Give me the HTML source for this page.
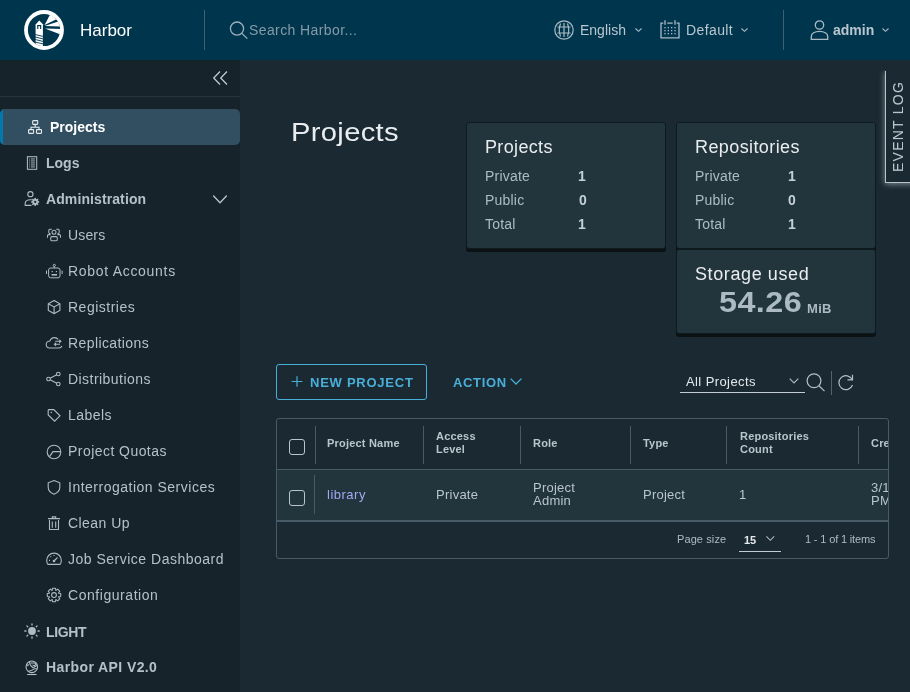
<!DOCTYPE html>
<html><head><meta charset="utf-8">
<style>
*{box-sizing:border-box;margin:0;padding:0}
html,body{width:910px;height:692px;overflow:hidden;background:#1b2a32;font-family:"Liberation Sans",sans-serif;-webkit-font-smoothing:antialiased}
.a{position:absolute;white-space:nowrap;line-height:1;will-change:transform}
svg{position:absolute;overflow:visible}
#hdr{position:absolute;left:0;top:0;width:910px;height:60px;background:#00364d}
#side{position:absolute;left:0;top:60px;width:240px;height:632px;background:#17232b}
.nav{color:#b4c1c9;font-size:14px}
.b{font-weight:bold}
.card{position:absolute;background:#22343c;border:1px solid #0f1a1f;border-radius:3px;box-shadow:0 3px 0 0 #0c1114}
.lbl{font-size:14px;color:#adbbc4;letter-spacing:.2px}
.val{font-size:14px;color:#c5d0d6;font-weight:bold}
.gh{font-size:11px;font-weight:bold;color:#b9c5cc;letter-spacing:.2px}
.gc{font-size:13px;color:#b9c5cc;letter-spacing:.25px}
</style></head><body>

<div id="hdr"></div>
<div id="side"></div>

<!-- header -->
<svg style="left:24px;top:10px" width="40" height="40" viewBox="0 0 40 40">
  <defs><clipPath id="ic"><circle cx="20" cy="20" r="16.2"/></clipPath></defs>
  <circle cx="20" cy="20" r="18" fill="none" stroke="#fff" stroke-width="3.8"/>
  <g clip-path="url(#ic)" fill="#fff">
    <polygon points="20.6,14.9 27.4,2 33.5,8.8"/>
    <polygon points="20.6,16.1 35,11.2 37.5,16.6"/>
    <polygon points="21,18.4 37.5,18.9 36.5,24.5"/>
    <polygon points="11.6,14.6 15.2,10.6 18.9,14.2 18.9,40 11.6,40"/>
  </g>
  <rect x="13.2" y="15" width="4" height="4" fill="#00364d"/>
  <rect x="14.3" y="16.2" width="1.8" height="2.8" fill="#fff"/>
  <g stroke="#00364d" stroke-width="0.9">
    <line x1="11" y1="24.5" x2="19.5" y2="26.5"/>
    <line x1="11" y1="27" x2="19.5" y2="29"/>
    <line x1="11" y1="29.5" x2="19.5" y2="31.5"/>
    <line x1="11" y1="32" x2="19.5" y2="34"/>
  </g>
</svg>
<div class="a" style="left:80px;top:22.2px;font-size:17px;color:#fff">Harbor</div>
<div style="position:absolute;left:204px;top:10px;width:1px;height:40px;background:#3f5f72"></div>
<svg style="left:229px;top:21px" width="20" height="20" viewBox="0 0 20 20">
  <circle cx="8" cy="7.6" r="6.6" fill="none" stroke="#9eb0bc" stroke-width="1.3"/>
  <line x1="12.8" y1="12.4" x2="18.3" y2="17.6" stroke="#9eb0bc" stroke-width="1.3"/>
</svg>
<div class="a" style="left:249.3px;top:23.15px;font-size:14px;color:#8599a7;letter-spacing:.4px">Search Harbor...</div>

<svg style="left:554px;top:20px" width="20" height="20" viewBox="0 0 20 20">
  <g fill="none" stroke="#a9bac5" stroke-width="1.2">
    <circle cx="10" cy="10" r="9.2"/>
    <path d="M10 3v14M3.5 7h13M3.5 13h13M6.5 3.5c-1.5 4-1.5 9 0 13M13.5 3.5c1.5 4 1.5 9 0 13"/>
  </g>
</svg>
<div class="a nav" style="left:579.6px;top:22.85px;color:#b9c6ce">English</div>
<svg style="left:635px;top:28px" width="7" height="4" viewBox="0 0 7 4"><path d="M.5 .5L3.5 3.3L6.5 .5" fill="none" stroke="#a9bac5" stroke-width="1.1"/></svg>

<svg style="left:660px;top:20px" width="20" height="19" viewBox="0 0 20 19">
  <g fill="none" stroke="#a9bac5" stroke-width="1.3">
    <path d="M3.3 3.2H1v14.6h18V3.2h-2.4M7.3 3.2h5.4"/>
    <path d="M5 0.3v4.5M15 0.3v4.5"/>
  </g>
  <g fill="#a9bac5">
    <rect x="4.3" y="7" width="1.3" height="1.3"/><rect x="7.7" y="7" width="1.3" height="1.3"/><rect x="11" y="7" width="1.3" height="1.3"/><rect x="14.4" y="7" width="1.3" height="1.3"/>
    <rect x="4.3" y="10" width="1.3" height="1.3"/><rect x="7.7" y="10" width="1.3" height="1.3"/><rect x="11" y="10" width="1.3" height="1.3"/><rect x="14.4" y="10" width="1.3" height="1.3"/>
    <rect x="4.3" y="13" width="1.3" height="1.3"/><rect x="7.7" y="13" width="1.3" height="1.3"/><rect x="11" y="13" width="1.3" height="1.3"/><rect x="14.4" y="13" width="1.3" height="1.3"/>
  </g>
</svg>
<div class="a nav" style="left:685.7px;top:22.85px;color:#b9c6ce;letter-spacing:.4px">Default</div>
<svg style="left:741px;top:28px" width="7" height="4" viewBox="0 0 7 4"><path d="M.5 .5L3.5 3.3L6.5 .5" fill="none" stroke="#a9bac5" stroke-width="1.1"/></svg>

<div style="position:absolute;left:783px;top:10px;width:1px;height:40px;background:#3f5f72"></div>
<svg style="left:810px;top:20px" width="20" height="20" viewBox="0 0 20 20">
  <g fill="none" stroke="#a9bac5" stroke-width="1.3">
    <circle cx="9.5" cy="5" r="4.2"/>
    <path d="M1.3 19.3v-3c0-2.8 3.5-5 8.2-5s8.2 2.2 8.2 5v3z"/>
  </g>
</svg>
<div class="a nav b" style="left:832.8px;top:22.75px;color:#b9c6ce">admin</div>
<svg style="left:882px;top:28px" width="7" height="4" viewBox="0 0 7 4"><path d="M.5 .5L3.5 3.3L6.5 .5" fill="none" stroke="#a9bac5" stroke-width="1.1"/></svg>

<!-- sidebar -->
<svg style="left:213px;top:71px" width="15" height="14" viewBox="0 0 15 14"><path d="M7 .5L.7 7l6.3 6.5M14 .5L7.7 7l6.3 6.5" fill="none" stroke="#c5d0d6" stroke-width="1.2"/></svg>
<div style="position:absolute;left:0;top:96px;width:240px;height:1px;background:#26353d"></div>

<div style="position:absolute;left:0;top:109px;width:240px;height:36px;background:#324f61;border-radius:5px"></div>
<div style="position:absolute;left:0;top:109px;width:6px;height:36px;background:#0278ab;border-radius:5px 0 0 5px"></div>
<div style="position:absolute;left:3px;top:109px;width:6px;height:36px;background:#324f61"></div>

<!-- projects icon -->
<svg style="left:28px;top:120px" width="14" height="14" viewBox="0 0 14 14">
  <g fill="none" stroke="#e6ebee" stroke-width="1.1">
    <rect x="4.7" y="0.6" width="5" height="3.8" rx=".6"/>
    <rect x="0.6" y="9.6" width="5" height="3.8" rx=".6"/>
    <rect x="8.5" y="9.6" width="5" height="3.8" rx=".6"/>
    <path d="M3 9.3V7.2h8v2.1M7.2 4.6v2.6"/>
  </g>
</svg>
<div class="a nav b" style="left:49.5px;top:120.15px;color:#fff">Projects</div>

<svg style="left:26px;top:156px" width="12" height="14" viewBox="0 0 12 14">
  <g fill="none" stroke="#b4c1c9" stroke-width="1"><rect x="1.4" y=".7" width="9.3" height="12.6"/></g>
  <g fill="#b4c1c9"><rect x="3.2" y="2.5" width=".9" height=".9"/><rect x="4.9" y="2.5" width="4" height=".9"/><rect x="3.2" y="4.5" width=".9" height=".9"/><rect x="4.9" y="4.5" width="4" height=".9"/><rect x="3.2" y="6.5" width=".9" height=".9"/><rect x="4.9" y="6.5" width="4" height=".9"/><rect x="3.2" y="8.5" width=".9" height=".9"/><rect x="4.9" y="8.5" width="4" height=".9"/><rect x="3.2" y="10.5" width=".9" height=".9"/><rect x="4.9" y="10.5" width="4" height=".9"/></g>
</svg>
<div class="a nav b" style="left:46.4px;top:156.35px">Logs</div>

<svg style="left:24px;top:191px" width="16" height="16" viewBox="0 0 16 16">
  <g fill="none" stroke="#adbbc4" stroke-width="1.1">
    <circle cx="6.4" cy="3.2" r="2.6"/>
    <path d="M7.5 14.4H1.2v-2.2c0-2 2.2-3.5 5-3.5 .6 0 1.1 0 1.6.1"/>
  </g>
  <g transform="translate(11.2 10.9)" fill="#adbbc4">
    <circle r="2.8"/>
    <g><rect x="-.8" y="-4" width="1.6" height="8"/><rect x="-4" y="-.8" width="8" height="1.6"/>
    <rect x="-.8" y="-4" width="1.6" height="8" transform="rotate(45)"/><rect x="-.8" y="-4" width="1.6" height="8" transform="rotate(-45)"/></g>
    <circle r="1.1" fill="#17232b"/>
  </g>
</svg>
<div class="a nav b" style="left:46.2px;top:192.35px;letter-spacing:.1px">Administration</div>
<svg style="left:213px;top:194.5px" width="14" height="9" viewBox="0 0 14 9"><path d="M.6 1L7 7.7L13.4 1" fill="none" stroke="#b4c1c9" stroke-width="1.4" stroke-linecap="round"/></svg>

<!-- sub items -->
<svg style="left:46px;top:228px" width="16" height="14" viewBox="0 0 16 14">
  <g fill="none" stroke="#adbbc4" stroke-width="1.05">
    <circle cx="8" cy="4.2" r="2"/>
    <rect x="4.7" y="8.6" width="6.6" height="4.2" rx="1.4"/>
    <path d="M5.8 1.3H3.8C3.2 1.3 2.8 1.8 2.8 2.4V4.2C2.8 5 3.5 5.7 4.6 5.9M4.6 6.6H2.7C2 6.6 1.5 7.1 1.5 7.8V9.8M10.2 1.3H12.2C12.8 1.3 13.2 1.8 13.2 2.4V4.2C13.2 5 12.5 5.7 11.4 5.9M11.4 6.6H13.3C14 6.6 14.5 7.1 14.5 7.8V9.8"/>
  </g>
</svg>
<div class="a nav" style="left:67.9px;top:228.15px;letter-spacing:.15px">Users</div>

<svg style="left:45px;top:263px" width="18" height="16" viewBox="0 0 18 16">
  <g fill="none" stroke="#adbbc4" stroke-width="1">
    <circle cx="9.3" cy="2.4" r="1.1"/><path d="M9.3 3.5v1.6"/>
    <rect x="3.6" y="5" width="11.4" height="9.8" rx="2"/>
    <path d="M1.5 7.6v3.4M17.1 7.6v3.4"/>
  </g>
  <g fill="#adbbc4"><rect x="6.6" y="8" width="1.2" height="1.2"/><rect x="10.8" y="8" width="1.2" height="1.2"/><rect x="6.6" y="11" width="5.4" height="1.6"/></g>
</svg>
<div class="a nav" style="left:67.9px;top:264.15px;letter-spacing:.7px">Robot Accounts</div>

<svg style="left:47px;top:299px" width="15" height="16" viewBox="0 0 15 16">
  <g fill="none" stroke="#adbbc4" stroke-width="1.1"><path d="M7.1 1.5L1.3 4.7v6.7l5.8 3.2 5.8-3.2V4.7z"/><path d="M1.3 4.7l5.8 3.2 5.8-3.2M7.1 7.9v6.7"/></g>
</svg>
<div class="a nav" style="left:67.9px;top:300.15px;letter-spacing:.5px">Registries</div>

<svg style="left:45px;top:337px" width="18" height="12" viewBox="0 0 18 12">
  <g fill="none" stroke="#adbbc4" stroke-width="1.05">
    <path d="M13.2 2.3C12.3 1.2 11 .6 9.5.6 7.3.6 5.6 2 5 3.9 2.8 4 1.2 5.5 1.2 7.5c0 2 1.6 3.5 3.6 3.5h9c1.5 0 2.7-.8 3.1-2"/>
    <path d="M10.2 4.3h5.6M14.3 2.8l1.6 1.5-1.6 1.5M15 7.3H9.4M11 5.8L9.4 7.3 11 8.8"/>
  </g>
</svg>
<div class="a nav" style="left:67.9px;top:336.15px;letter-spacing:.4px">Replications</div>

<svg style="left:46px;top:371px" width="15" height="16" viewBox="0 0 15 16">
  <g fill="none" stroke="#adbbc4" stroke-width="1.1">
    <circle cx="2.5" cy="8" r="1.8"/><circle cx="12.3" cy="3" r="1.8"/><circle cx="12.3" cy="13" r="1.8"/>
    <path d="M4.1 7.2l6.6-3.4M4.1 8.8l6.6 3.4"/>
  </g>
</svg>
<div class="a nav" style="left:67.9px;top:372.15px;letter-spacing:.45px">Distributions</div>

<svg style="left:47px;top:408px" width="14" height="15" viewBox="0 0 14 15">
  <g fill="none" stroke="#adbbc4" stroke-width="1.1"><path d="M1.8 1.6h5l6.2 6.2-5.4 5.4L1.2 7V2.2z"/></g>
  <circle cx="4.3" cy="4.4" r=".75" fill="#adbbc4"/>
</svg>
<div class="a nav" style="left:67.9px;top:408.15px;letter-spacing:.45px">Labels</div>

<svg style="left:46px;top:444px" width="16" height="16" viewBox="0 0 16 16">
  <g fill="none" stroke="#adbbc4" stroke-width="1.1"><circle cx="8" cy="8" r="6.8"/><path d="M3.5 12.6L7 7.6h7.8"/></g>
</svg>
<div class="a nav" style="left:67.9px;top:444.15px;letter-spacing:.45px">Project Quotas</div>

<svg style="left:47px;top:480px" width="14" height="16" viewBox="0 0 14 16">
  <g fill="none" stroke="#adbbc4" stroke-width="1.1"><path d="M7 .6L12.8 2.8v4.4c0 3-2.4 5.6-5.8 7C3.6 12.8 1.2 10.2 1.2 7.2V2.8z"/></g>
</svg>
<div class="a nav" style="left:67.9px;top:480.15px;letter-spacing:.5px">Interrogation Services</div>

<svg style="left:47px;top:516px" width="14" height="15" viewBox="0 0 14 15">
  <g fill="none" stroke="#adbbc4" stroke-width="1.1"><path d="M1 2.6h12M5.3 2.6V.9h3.4v1.7M2.5 4.1v9.4h9v-9.4M5.3 5.6v6.2M8.7 5.6v6.2"/></g>
</svg>
<div class="a nav" style="left:67.9px;top:516.15px;letter-spacing:.45px">Clean Up</div>

<svg style="left:46px;top:552px" width="16" height="14" viewBox="0 0 16 14">
  <g fill="none" stroke="#adbbc4" stroke-width="1.1"><path d="M2 12.4c-.9-1-1.3-2.5-1.3-4 0-4 3.3-7.3 7.3-7.3s7.3 3.3 7.3 7.3c0 1.5-.4 3-1.3 4z"/><path d="M8 9l3.5-3.5M3 8.4h1M4.5 4.4l.7.7M8 2.9v1M11.5 4.4"/></g>
  <circle cx="8" cy="9" r="1.3" fill="#adbbc4"/>
</svg>
<div class="a nav" style="left:67.9px;top:552.15px;letter-spacing:.5px">Job Service Dashboard</div>

<svg style="left:46px;top:587px" width="16" height="16" viewBox="0 0 16 16">
  <g fill="none" stroke="#adbbc4" stroke-width="1.05" stroke-linejoin="round"><path d="M6.24 3.32 L6.49 1.27 L9.51 1.27 L9.76 3.32 L10.06 3.45 L11.70 2.17 L13.83 4.30 L12.55 5.94 L12.68 6.24 L14.73 6.49 L14.73 9.51 L12.68 9.76 L12.55 10.06 L13.83 11.70 L11.70 13.83 L10.06 12.55 L9.76 12.68 L9.51 14.73 L6.49 14.73 L6.24 12.68 L5.94 12.55 L4.30 13.83 L2.17 11.70 L3.45 10.06 L3.32 9.76 L1.27 9.51 L1.27 6.49 L3.32 6.24 L3.45 5.94 L2.17 4.30 L4.30 2.17 L5.94 3.45Z"/><circle cx="8" cy="8" r="2.4"/></g>
</svg>
<div class="a nav" style="left:67.9px;top:588.15px;letter-spacing:.55px">Configuration</div>

<svg style="left:24px;top:623px" width="16" height="16" viewBox="0 0 16 16">
  <circle cx="8" cy="8" r="3.9" fill="#adbbc4"/>
  <g stroke="#adbbc4" stroke-width="1.3" stroke-linecap="round">
    <path d="M8 .8v1.2M8 14v1.2M.8 8H2M14 8h1.2M2.9 2.9l.8.8M12.3 12.3l.8.8M2.9 13.1l.8-.8M12.3 3.7l.8-.8"/>
  </g>
</svg>
<div class="a nav b" style="left:46.2px;top:624.65px;letter-spacing:-.35px">LIGHT</div>

<svg style="left:25.3px;top:659.6px" width="14" height="16" viewBox="0 0 14 16">
  <g fill="none" stroke="#b4c1c9" stroke-width="1.05">
    <circle cx="6.8" cy="6.8" r="5.8"/>
    <path d="M4.4 2C4.8 4.4 5.8 6.6 8 7.7 9.5 7.2 11 6.4 12.3 5.2M5.6 2.9h4.2l1.2 1.6-1.8 1.4-1.7-1M3.3 11.4C5.3 10.8 7.8 10 9.4 8.8c1-.3 2.2 0 3 .3M1.6 6.2l1.2-1.4 1.3.2"/>
    <path d="M2.2 14.5h9.3" stroke-width="1.1"/>
  </g>
</svg>
<div class="a nav b" style="left:46.2px;top:660.25px;letter-spacing:.4px">Harbor API V2.0</div>

<!-- main content -->
<div class="a" style="left:291.2px;top:119.4px;font-size:26.5px;color:#e9edf0;letter-spacing:.3px;transform:scaleX(1.1);transform-origin:0 0">Projects</div>

<div class="card" style="left:466px;top:122px;width:200px;height:127px"></div>
<div class="a" style="left:485.4px;top:137.76px;font-size:18px;color:#eaedf0;letter-spacing:.35px">Projects</div>
<div class="a lbl" style="left:485.4px;top:168.95px">Private</div>
<div class="a lbl" style="left:485.4px;top:193.15px">Public</div>
<div class="a lbl" style="left:485.4px;top:216.75px">Total</div>
<div class="a val" style="left:578px;top:168.95px">1</div>
<div class="a val" style="left:578.5px;top:193.15px">0</div>
<div class="a val" style="left:578px;top:216.75px">1</div>

<div class="card" style="left:676px;top:122px;width:200px;height:127px"></div>
<div class="a" style="left:695.2px;top:137.76px;font-size:18px;color:#eaedf0;letter-spacing:.4px">Repositories</div>
<div class="a lbl" style="left:695.2px;top:168.95px">Private</div>
<div class="a lbl" style="left:695.2px;top:193.15px">Public</div>
<div class="a lbl" style="left:695.2px;top:216.75px">Total</div>
<div class="a val" style="left:787.5px;top:168.95px">1</div>
<div class="a val" style="left:788px;top:193.15px">0</div>
<div class="a val" style="left:787.5px;top:216.75px">1</div>

<div class="card" style="left:676px;top:249px;width:200px;height:85px"></div>
<div class="a" style="left:695.2px;top:264.8px;font-size:18px;color:#eaedf0;letter-spacing:.6px">Storage used</div>
<div class="a" style="left:718.6px;top:288.4px;font-size:29px;color:#acbac3;font-weight:bold;letter-spacing:.4px;transform:scaleX(1.115);transform-origin:0 0">54.26</div>
<div class="a" style="left:807.3px;top:301.8px;font-size:13px;color:#acbac3;font-weight:bold;letter-spacing:.3px">MiB</div>

<!-- event log tab -->
<div style="position:absolute;left:886px;top:70px;width:30px;height:112px;background:#1b2a32;box-shadow:-1px 1px 0 0 #b9c3c9,-1px 2px 6px 0 rgba(215,225,230,.55);clip-path:inset(0 -12px -12px -12px)"></div>
<div class="a" style="left:891px;top:171.8px;font-size:14px;color:#b9c6ce;letter-spacing:1.25px;transform:rotate(-90deg);transform-origin:0 0">EVENT LOG</div>

<!-- toolbar -->
<div style="position:absolute;left:276px;top:364px;width:151px;height:36px;border:1px solid #49afd9;border-radius:3px"></div>
<svg style="left:291px;top:376px" width="12" height="11" viewBox="0 0 12 11"><path d="M6 .3v10.4M.6 5.5h10.8" stroke="#49afd9" stroke-width="1.2"/></svg>
<div class="a" style="left:310px;top:376px;font-size:13px;font-weight:bold;color:#49afd9;letter-spacing:.75px">NEW PROJECT</div>
<div class="a" style="left:452.5px;top:376px;font-size:13px;font-weight:bold;color:#49afd9;letter-spacing:.65px">ACTION</div>
<svg style="left:510px;top:377.6px" width="12" height="7" viewBox="0 0 12 7"><path d="M.6 .6L6 6l5.4-5.4" fill="none" stroke="#49afd9" stroke-width="1.3"/></svg>

<div class="a" style="left:685.8px;top:375px;font-size:13px;color:#e3e8eb;letter-spacing:.4px">All Projects</div>
<svg style="left:789px;top:378px" width="10" height="6" viewBox="0 0 10 6"><path d="M.7 .7L5 5l4.3-4.3" fill="none" stroke="#adbbc4" stroke-width="1.1"/></svg>
<div style="position:absolute;left:680px;top:392px;width:125px;height:1px;background:#c3ccd2"></div>
<svg style="left:806px;top:373px" width="20" height="20" viewBox="0 0 20 20">
  <g fill="none" stroke="#b3c0c8" stroke-width="1.2"><circle cx="8" cy="7.8" r="6.9"/><path d="M12.9 12.7l5.6 5.4"/></g>
</svg>
<div style="position:absolute;left:831px;top:371px;width:1px;height:24px;background:#506470"></div>
<svg style="left:838px;top:374px" width="16" height="16" viewBox="0 0 16 16">
  <g fill="none" stroke="#b3c0c8" stroke-width="1.2"><path d="M14.2 5.6A7 7 0 1 0 14.5 11"/><path d="M14.5 .8v5h-5"/></g>
</svg>

<!-- datagrid -->
<div style="position:absolute;left:276px;top:418px;width:613px;height:141px;border:1px solid #485a66;border-radius:3px;overflow:hidden">
  <div style="position:absolute;left:0;top:50px;width:100%;height:53px;background:#22343c;border-top:1px solid #485a66;border-bottom:2px solid #485a66"></div>
</div>
<div style="position:absolute;left:289px;top:439px;width:16px;height:16px;border:1px solid #b9c5cc;border-radius:3px"></div>
<div style="position:absolute;left:289px;top:490px;width:16px;height:16px;border:1px solid #b9c5cc;border-radius:3px"></div>
<div style="position:absolute;left:315px;top:426px;width:1px;height:38px;background:#485a66"></div>
<div style="position:absolute;left:423px;top:426px;width:1px;height:38px;background:#485a66"></div>
<div style="position:absolute;left:520px;top:426px;width:1px;height:38px;background:#485a66"></div>
<div style="position:absolute;left:630px;top:426px;width:1px;height:38px;background:#485a66"></div>
<div style="position:absolute;left:726px;top:426px;width:1px;height:38px;background:#485a66"></div>
<div style="position:absolute;left:858px;top:426px;width:1px;height:38px;background:#485a66"></div>
<div style="position:absolute;left:314px;top:475px;width:1px;height:39px;background:#485a66"></div>

<div style="position:absolute;left:277px;top:419px;width:611px;height:139px;overflow:hidden">
<div class="a gh" style="left:50.1px;top:19.4px">Project Name</div>
<div class="a gh" style="left:159.3px;top:11.7px">Access</div>
<div class="a gh" style="left:159.3px;top:25.4px">Level</div>
<div class="a gh" style="left:255.9px;top:19.4px">Role</div>
<div class="a gh" style="left:366.4px;top:19.4px">Type</div>
<div class="a gh" style="left:462.5px;top:11.7px">Repositories</div>
<div class="a gh" style="left:462.5px;top:25.4px">Count</div>
<div class="a gh" style="left:593.5px;top:19.4px">Creation Time</div>

<div class="a gc" style="left:50.1px;top:69.4px;color:#a4a7f0;letter-spacing:.5px">library</div>
<div class="a gc" style="left:159.3px;top:69.4px">Private</div>
<div class="a gc" style="left:255.9px;top:62.3px">Project</div>
<div class="a gc" style="left:255.9px;top:75.2px">Admin</div>
<div class="a gc" style="left:366.4px;top:68.7px">Project</div>
<div class="a gc" style="left:461.5px;top:68.7px">1</div>
<div class="a gc" style="left:593.5px;top:62.3px">3/14/23, 1:00</div>
<div class="a gc" style="left:593.5px;top:75.2px">PM</div>

<div class="a" style="left:400.3px;top:114.5px;font-size:11px;color:#adbbc4;letter-spacing:.1px">Page size</div>
<div class="a" style="left:467.3px;top:115.8px;font-size:11px;font-weight:bold;color:#e3e8eb">15</div>
<svg style="left:489px;top:117.3px" width="9" height="5" viewBox="0 0 9 5"><path d="M.4 .4L4.3 4.3 8.2 .4" fill="none" stroke="#adbbc4" stroke-width="1.05"/></svg>
<div style="position:absolute;left:462px;top:132px;width:42px;height:1px;background:#c3ccd2"></div>
<div class="a" style="left:528px;top:114.5px;font-size:11px;color:#adbbc4;letter-spacing:-.15px">1 - 1 of 1 items</div>
</div>

</body></html>
